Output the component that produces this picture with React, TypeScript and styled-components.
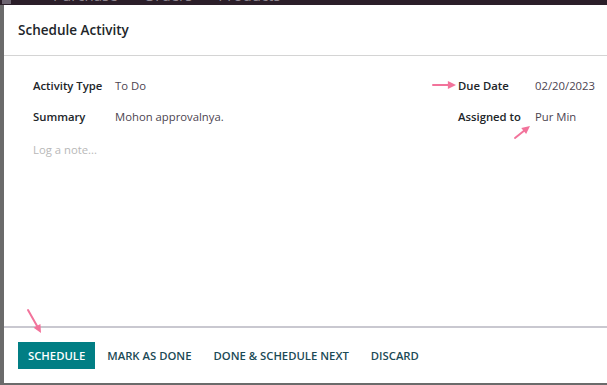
import React from 'react'
import styled, { createGlobalStyle } from 'styled-components'

const GlobalStyle = createGlobalStyle`
  html, body {
    margin: 0;
    padding: 0;
    background: #5a5a5a;
    font-family: "Open Sans", "Noto Sans", sans-serif;
  }
  #root {
    width: 607px;
    height: 385px;
    overflow: hidden;
  }
`

const Page = styled.div`
  position: relative;
  width: 607px;
  height: 385px;
  display: flex;
  flex-direction: column;
  background: #6b6b6b;
`

const NavBar = styled.div`
  height: 5px;
  flex: none;
  background: #2b1e29;
  overflow: hidden;
  display: flex;
  align-items: flex-start;
  gap: 26px;
  padding-left: 2px;
`

const NavApps = styled.span`
  width: 9px;
  height: 18px;
  margin-top: -14px;
  background: #6d6470;
  margin-right: 16px;
`

const NavItem = styled.span`
  font-size: 15px;
  line-height: 18px;
  margin-top: -14px;
  color: #8f8690;
`

const Stage = styled.div`
  flex: 1;
  display: flex;
  padding-left: 4px;
  padding-bottom: 2px;
  min-height: 0;
`

const Modal = styled.div`
  flex: 1;
  background: #fff;
  display: flex;
  flex-direction: column;
`

const Header = styled.div`
  height: 50px;
  flex: none;
  display: flex;
  align-items: center;
  padding-left: 14px;
  border-bottom: 1px solid #d4d4d4;
`

const Title = styled.h4`
  margin: 0;
  font-size: 13.5px;
  font-weight: 600;
  color: #212529;
`

const Body = styled.div`
  flex: 1;
  padding: 14px 12px 0 29px;
  display: flex;
  flex-direction: column;
`

const Fields = styled.div`
  display: flex;
  justify-content: space-between;
`

const Group = styled.div<{ $label: number }>`
  display: grid;
  grid-template-columns: ${p => p.$label}px auto;
  grid-auto-rows: 31px;
  align-items: center;
`

const Label = styled.span`
  font-size: 11.3px;
  font-weight: 600;
  color: #212529;
  white-space: nowrap;
`

const Value = styled.span`
  font-size: 11.3px;
  color: #4c4450;
  white-space: nowrap;
`

const Note = styled.div`
  margin-top: 10px;
  font-size: 11.3px;
  color: #b8b8b8;
`

const Footer = styled.div`
  height: 55px;
  flex: none;
  border-top: 2px solid #c9c8d0;
  display: flex;
  align-items: center;
  padding: 0 14px;
`

const Button = styled.button<{ $primary?: boolean }>`
  height: 27px;
  padding: 0 10px;
  margin: 0 2px 0 0;
  border: none;
  border-radius: 0;
  font-family: inherit;
  font-size: 11.3px;
  font-weight: 600;
  text-transform: uppercase;
  background: ${p => (p.$primary ? '#017e84' : 'transparent')};
  color: ${p => (p.$primary ? '#ffffff' : '#1b4a56')};
`

const Arrow = styled.svg`
  position: absolute;
  overflow: visible;
  pointer-events: none;
`

const PinkArrow: React.FC<{ x: number; y: number; x2: number; y2: number }> = ({ x, y, x2, y2 }) => {
  const ang = Math.atan2(y2 - y, x2 - x)
  const len = 9
  const spread = 0.45
  const p1 = [x2 - len * Math.cos(ang - spread), y2 - len * Math.sin(ang - spread)]
  const p2 = [x2 - len * Math.cos(ang + spread), y2 - len * Math.sin(ang + spread)]
  const sx = x2 - 6 * Math.cos(ang)
  const sy = y2 - 6 * Math.sin(ang)
  return (
    <Arrow width={1} height={1} style={{ left: 0, top: 0 }}>
      <line x1={x} y1={y} x2={sx} y2={sy} stroke="#f2739b" strokeWidth={2} strokeLinecap="round" />
      <polygon points={`${x2},${y2} ${p1[0]},${p1[1]} ${p2[0]},${p2[1]}`} fill="#f2739b" />
    </Arrow>
  )
}

export default function App() {
  return (
    <>
      <GlobalStyle />
      <Page>
        <NavBar>
          <NavApps />
          <NavItem>Purchase</NavItem>
          <NavItem>Orders</NavItem>
          <NavItem>Products</NavItem>
        </NavBar>
        <Stage>
          <Modal>
            <Header>
              <Title>Schedule Activity</Title>
            </Header>
            <Body>
              <Fields>
                <Group $label={82}>
                  <Label>Activity Type</Label>
                  <Value>To Do</Value>
                  <Label>Summary</Label>
                  <Value>Mohon approvalnya.</Value>
                </Group>
                <Group $label={77}>
                  <Label>Due Date</Label>
                  <Value>02/20/2023</Value>
                  <Label>Assigned to</Label>
                  <Value>Pur Min</Value>
                </Group>
              </Fields>
              <Note>Log a note...</Note>
            </Body>
            <Footer>
              <Button $primary>Schedule</Button>
              <Button>Mark as done</Button>
              <Button>Done &amp; Schedule Next</Button>
              <Button>Discard</Button>
            </Footer>
          </Modal>
        </Stage>
        <PinkArrow x={433} y={85} x2={456} y2={85} />
        <PinkArrow x={515} y={138} x2={530} y2={126} />
        <PinkArrow x={28} y={310} x2={41} y2={333} />
      </Page>
    </>
  )
}
